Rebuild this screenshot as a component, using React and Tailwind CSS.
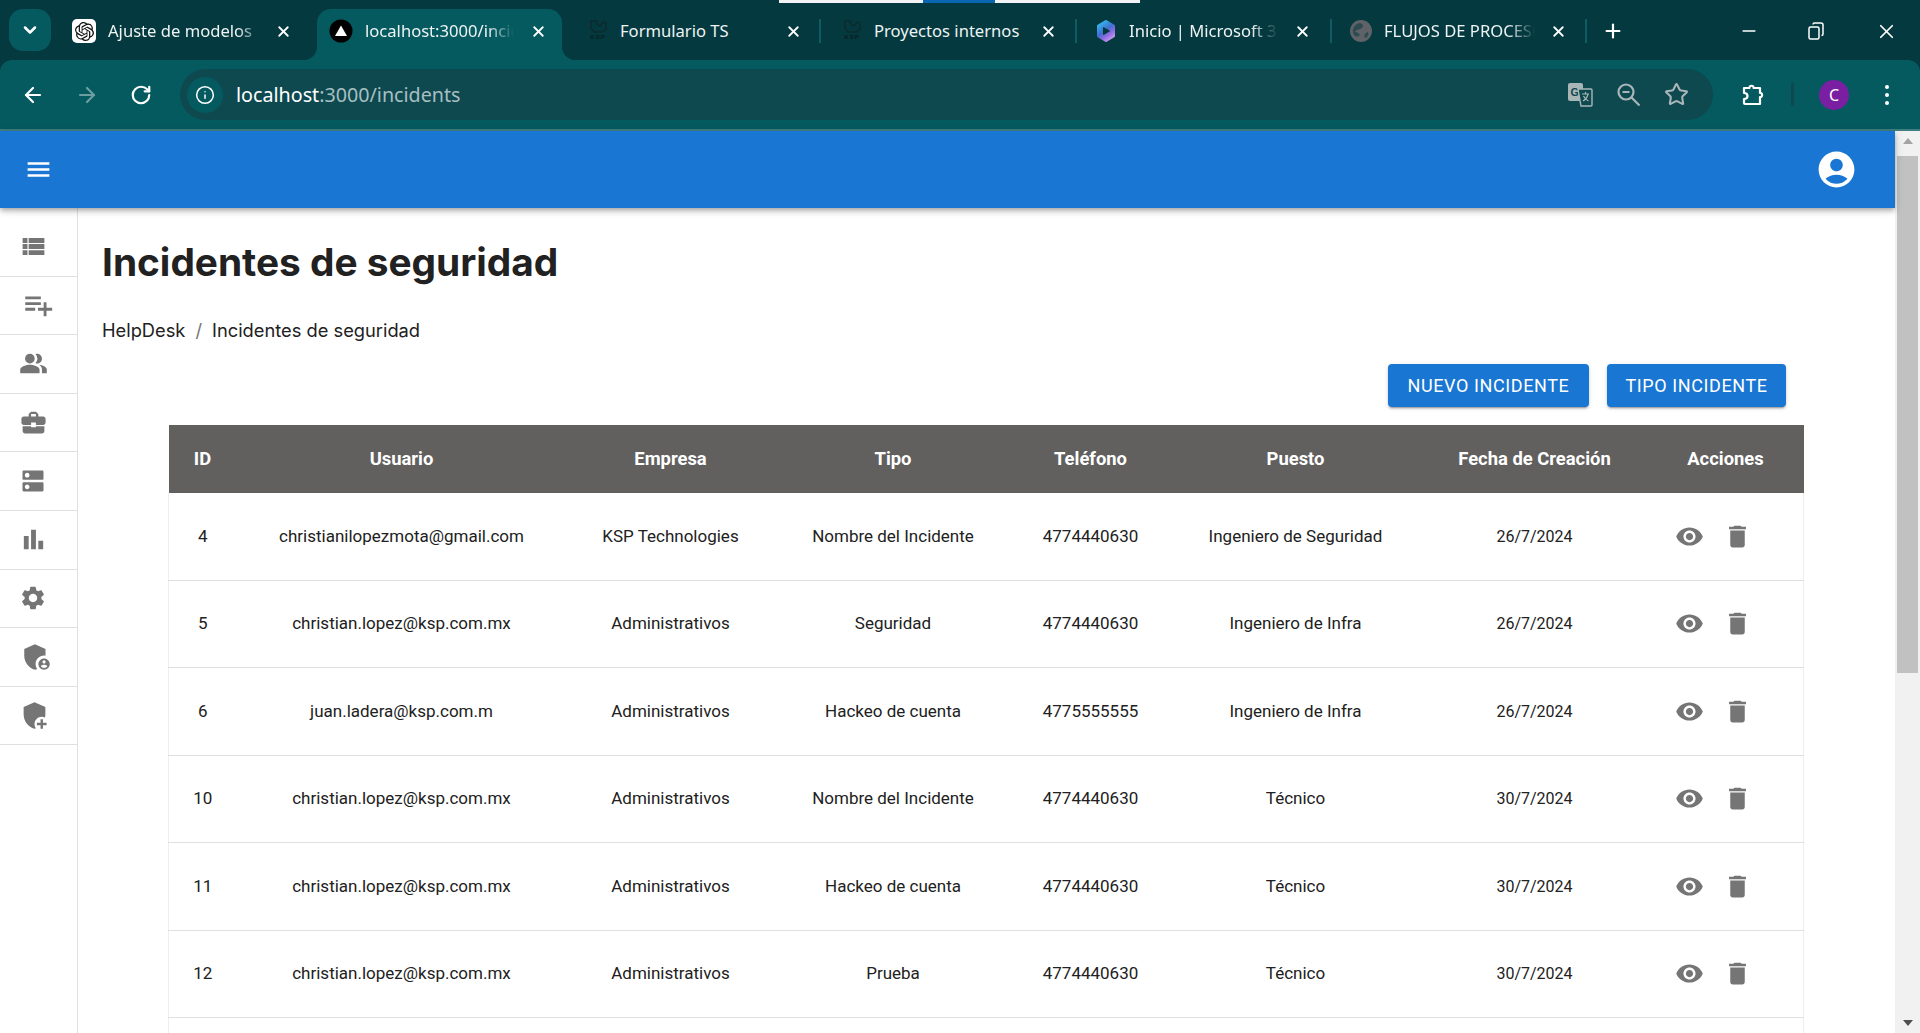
import React from "react";
import { ArrowLeft, ArrowRight, ChevronDown, Info, Minus, Plus, RotateCw, Star, X } from "lucide-react";
import {
  MdAccountCircle,
  MdAddModerator,
  MdAdminPanelSettings,
  MdBarChart,
  MdBusinessCenter,
  MdDelete,
  MdDns,
  MdMenu,
  MdPeopleAlt,
  MdPlaylistAdd,
  MdSettings,
  MdViewList,
  MdVisibility,
} from "react-icons/md";
import { SiOpenai } from "react-icons/si";

const KspIcon = () => (
  <div className="flex h-6 w-6 flex-col items-center">
    <svg width="20" height="15" viewBox="0 0 20 15" fill="none" stroke="#0d2a2d" strokeWidth="1.5">
      <path d="M3 2h5l1 3 3 2 3-4 3 1v6l-4 3H6L3 9z" />
    </svg>
    <span className="font-['Liberation_Sans',sans-serif] text-[6px] leading-[7px] font-bold tracking-[1px] text-[#0a1c1e]">KSP</span>
  </div>
);

const OpenAiIcon = () => (
  <div className="flex h-6 w-6 items-center justify-center rounded-[5px] bg-white">
    <SiOpenai size={19} color="#111" />
  </div>
);

const VercelIcon = () => (
  <svg width="24" height="24" viewBox="0 0 24 24">
    <circle cx="12" cy="12" r="11.5" fill="#000" />
    <path d="M12 6.500l6 10.500H6z" fill="#fff" />
  </svg>
);

const M365Icon = () => (
  <svg width="24" height="24" viewBox="0 0 24 24">
    <defs>
      <linearGradient id="m1" x1="0.2" y1="0" x2="0.8" y2="1">
        <stop offset="0" stopColor="#35b8ee" />
        <stop offset="0.45" stopColor="#3f6fd0" />
        <stop offset="0.7" stopColor="#8d6be0" />
        <stop offset="1" stopColor="#c99af0" />
      </linearGradient>
    </defs>
    <path d="M12 2.500l7.500 4.500v10L12 21.500 4.500 17V7z" fill="url(#m1)" stroke="url(#m1)" strokeWidth="3" strokeLinejoin="round" />
    <path d="M9.500 8.500l6 3.500-6 3.500z" fill="#03393f" stroke="#03393f" strokeLinejoin="round" />
  </svg>
);

const GlobeIcon = () => (
  <svg width="24" height="24" viewBox="0 0 24 24">
    <circle cx="12" cy="12" r="11" fill="#5f6368" />
    <path d="M11 4c3 1 4 3 2 5s-6 1-7 4c2 0 4 1 5 3-2 2-4 2-6 0C2 11 5 5 11 4zM19 13c1 2 0 5-3 6-1-2-1-5 3-6z" fill="#03393f" opacity="0.55" />
  </svg>
);

const TranslateIcon = () => (
  <svg width="26" height="26" viewBox="0 0 26 26">
    <rect x="1" y="1" width="15" height="18" rx="2" fill="#a9b6b8" />
    <text x="3.5" y="14" fontFamily="Liberation Sans, sans-serif" fontSize="11" fontWeight="700" fill="#0e4950">G</text>
    <path d="M11 7h13a1 1 0 0 1 1 1v15a1 1 0 0 1-1 1H14l-3-17z" fill="#0e4950" stroke="#a9b6b8" strokeWidth="1.4" />
    <path d="M15 12h7M18.500 10v2M21 12c-1 4-3 6-5 7M16.500 14c1 2 3 4 5 5" fill="none" stroke="#a9b6b8" strokeWidth="1.2" />
  </svg>
);

const ZoomIcon = () => (
  <svg width="25" height="25" viewBox="0 0 25 25" fill="none" stroke="#a9b6b8" strokeWidth="2.2" className="ml-[23px]">
    <circle cx="10" cy="10" r="7.500" />
    <path d="M6.500 10h7M15.500 15.500l8 8" />
  </svg>
);

const PuzzleIcon = () => (
  <svg width="26" height="26" viewBox="0 0 26 26" fill="none" stroke="#fff" strokeWidth="2.2" strokeLinejoin="round">
    <path d="M4 6h5.500c-.4-3 4.400-3 4 0H20v5c2.800-.4 2.800 4.400 0 4v7H5c-.5 0-1-.5-1-1v-4c2.500 0 3.500-1.500 3.500-3S6.500 11 4 11z" />
  </svg>
);

const RestoreIcon = () => (
  <svg width="16" height="18" viewBox="0 0 16 18" fill="none" stroke="#fff" strokeWidth="1.5">
    <rect x="1" y="5" width="10" height="12" rx="1.5" />
    <path d="M5 2.500c0-.8.5-1.500 1.500-1.500H13c1 0 2 1 2 2v9c0 1-.5 1.500-1.500 1.500" />
  </svg>
);

const tabs = [
  { title: "Ajuste de modelos", icon: <OpenAiIcon />, box: "w-[263px] pl-[18px]", text: "ml-[12px]", close: "mr-[20px]", fade: true },
  { title: "localhost:3000/incidents", icon: <VercelIcon />, box: "w-[245px] pl-[12px] bg-[#055a60] rounded-t-[14px] relative", text: "ml-[12px] mr-[6px]", close: "mr-[10px]", fade: true, active: true },
  { title: "Formulario TS", icon: <KspIcon />, box: "w-[259px] pl-[24px]", text: "ml-[10px]", close: "mr-[12px]", sep: true },
  { title: "Proyectos internos", icon: <KspIcon />, box: "w-[256px] pl-[19px]", text: "ml-[10px]", close: "mr-[13px]", sep: true },
  { title: "Inicio | Microsoft 365", icon: <M365Icon />, box: "w-[255px] pl-[17px]", text: "ml-[11px] mr-[6px]", close: "mr-[14px]", fade: true, sep: true },
  { title: "FLUJOS DE PROCESOS", icon: <GlobeIcon />, box: "w-[255px] pl-[17px]", text: "ml-[11px] mr-[5px]", close: "mr-[13px]", fade: true, sep: true },
];

const Tab = ({ tab }) => (
  <div className={"flex h-[51px] shrink-0 items-center pb-[7px] " + tab.box}>
    {tab.active && (
      <>
        <div className="absolute bottom-0 -left-[14px] h-[14px] w-[14px] bg-[radial-gradient(circle_at_0_0,transparent_14px,#055a60_14.500px)]" />
        <div className="absolute -right-[14px] bottom-0 h-[14px] w-[14px] bg-[radial-gradient(circle_at_100%_0,transparent_14px,#055a60_14.500px)]" />
      </>
    )}
    <div className="w-6 shrink-0">{tab.icon}</div>
    <div
      className={
        "min-w-0 flex-1 overflow-hidden text-[16.600px] whitespace-nowrap text-[#eef3f3] " +
        tab.text +
        " " +
        (tab.fade ? "[mask-image:linear-gradient(to_right,black_82%,transparent)]" : "")
      }
    >
      {tab.title}
    </div>
    <div className={"ml-[4px] flex w-[28px] shrink-0 justify-center " + tab.close}>
      <X size={17} strokeWidth={2.6} color="#fff" />
    </div>
    {tab.sep && <div className="h-[24px] w-[2px] shrink-0 bg-[#0e5b62]" />}
  </div>
);

const ChromeBar = () => (
  <div className="relative h-[131px] shrink-0 bg-[#03393f] font-['Noto_Sans',sans-serif]">
    <div className="absolute top-0 left-[779px] flex h-[3px]">
      <div className="w-[144px] bg-[#f1f3f4]" />
      <div className="w-[72px] bg-[#0a66b0]" />
      <div className="w-[145px] bg-[#f1f3f4]" />
    </div>
    <div className="flex h-[60px] items-end">
      <div className="mb-[9px] ml-[9px] flex h-[42px] w-[42px] items-center justify-center rounded-[14px] bg-[#055a60]">
        <ChevronDown size={20} strokeWidth={3} color="#fff" />
      </div>
      <div className="w-[3px]" />
      {tabs.map((t) => (
        <Tab key={t.title} tab={t} />
      ))}
      <div className="flex h-[51px] items-center pb-[7px] pl-[15px]">
        <Plus size={22} strokeWidth={2.4} color="#fff" />
      </div>
      <div className="flex h-[51px] flex-1 items-center pb-[7px]">
        <div className="ml-[115px] w-[20px]">
          <Minus size={20} strokeWidth={2} color="#fff" />
        </div>
        <div className="ml-[49px]">
          <RestoreIcon />
        </div>
        <div className="ml-[51px]">
          <X size={23} strokeWidth={1.8} color="#fff" />
        </div>
      </div>
    </div>
    <div className="flex h-[69px] items-center rounded-t-[12px] bg-[#055a60]">
      <div className="flex w-[180px] items-center pl-[21px]">
        <ArrowLeft size={24} strokeWidth={2.2} color="#fff" />
        <ArrowRight size={24} strokeWidth={2.2} color="#6c9ea1" className="ml-[30px]" />
        <RotateCw size={22} strokeWidth={2.4} color="#fff" className="ml-[31px]" />
      </div>
      <div className="flex h-[51px] w-[1533px] items-center rounded-full bg-[#0e4950] pl-[7px]">
        <div className="flex h-[36px] w-[36px] items-center justify-center rounded-full bg-[#055a60]">
          <Info size={20} strokeWidth={1.8} color="#fff" />
        </div>
        <div className="ml-[13px] flex-1 text-[19.700px] text-[#a7bfc1]">
          <span className="text-white">localhost</span>:3000/incidents
        </div>
        <TranslateIcon />
        <ZoomIcon />
        <Star size={25} strokeWidth={2} color="#a9b6b8" className="mr-[24px] ml-[23px]" />
      </div>
      <div className="ml-[27px]">
        <PuzzleIcon />
      </div>
      <div className="ml-[25px] h-[23px] w-[3px] bg-[#0e4950]" />
      <div className="ml-[25px] flex h-[30px] w-[30px] items-center justify-center rounded-full bg-[#7b1fa2] text-[16px] text-white">C</div>
      <div className="ml-[36px] flex flex-col gap-[4px]">
        <div className="h-[4px] w-[4px] rounded-full bg-white" />
        <div className="h-[4px] w-[4px] rounded-full bg-white" />
        <div className="h-[4px] w-[4px] rounded-full bg-white" />
      </div>
    </div>
    <div className="h-[2px] bg-[#3f7d7f]" />
  </div>
);

const sideIcons = [
  { Icon: MdViewList, size: 29 },
  { Icon: MdPlaylistAdd, size: 34, cls: "ml-[10px]" },
  { Icon: MdPeopleAlt, size: 29 },
  { Icon: MdBusinessCenter, size: 29 },
  { Icon: MdDns, size: 28 },
  { Icon: MdBarChart, size: 29 },
  { Icon: MdSettings, size: 28 },
  { Icon: MdAdminPanelSettings, size: 34, cls: "ml-[8px]" },
  { Icon: MdAddModerator, size: 29, cls: "ml-[2px]" },
];

const Sidebar = () => (
  <div className="w-[78px] shrink-0 border-r border-[#e0e0e0] pt-[10px]">
    {sideIcons.map(({ Icon, size, cls }, i) => (
      <div key={i} className="flex h-[58.600px] w-full items-center justify-center border-b border-[#e0e0e0] pr-[11px]">
        <Icon size={size} color="#757575" className={cls} />
      </div>
    ))}
  </div>
);

const rows = [
  ["4", "christianilopezmota@gmail.com", "KSP Technologies", "Nombre del Incidente", "4774440630", "Ingeniero de Seguridad", "26/7/2024"],
  ["5", "christian.lopez@ksp.com.mx", "Administrativos", "Seguridad", "4774440630", "Ingeniero de Infra", "26/7/2024"],
  ["6", "juan.ladera@ksp.com.m", "Administrativos", "Hackeo de cuenta", "4775555555", "Ingeniero de Infra", "26/7/2024"],
  ["10", "christian.lopez@ksp.com.mx", "Administrativos", "Nombre del Incidente", "4774440630", "Técnico", "30/7/2024"],
  ["11", "christian.lopez@ksp.com.mx", "Administrativos", "Hackeo de cuenta", "4774440630", "Técnico", "30/7/2024"],
  ["12", "christian.lopez@ksp.com.mx", "Administrativos", "Prueba", "4774440630", "Técnico", "30/7/2024"],
];

const heads = ["ID", "Usuario", "Empresa", "Tipo", "Teléfono", "Puesto", "Fecha de Creación", "Acciones"];

const IncidentsTable = () => (
  <div className="mt-[18px] ml-[66px] w-[1636px] font-['Roboto',sans-serif]">
    <table className="w-full table-fixed border-collapse text-center text-[17px] text-[#212121]">
      <colgroup>
        <col className="w-[68px]" />
        <col className="w-[330px]" />
        <col className="w-[208px]" />
        <col className="w-[237px]" />
        <col className="w-[158px]" />
        <col className="w-[252px]" />
        <col className="w-[226px]" />
        <col />
      </colgroup>
      <thead>
        <tr className="h-[68px] bg-[#62605e] text-[18.400px] text-white">
          {heads.map((h) => (
            <th key={h} className="font-bold">
              {h}
            </th>
          ))}
        </tr>
      </thead>
      <tbody>
        {rows.map((r) => (
          <tr key={r[0]} className="h-[87.500px] border-x border-b border-x-[#eeeeee] border-b-[#e0e0e0] first:h-[87px]">
            {r.map((c, i) => (
              <td key={i} className={i === 6 ? "pt-[1px] text-[16px]" : ""}>
                {c}
              </td>
            ))}
            <td>
              <div className="flex items-center pl-[27px]">
                <MdVisibility size={29} color="#757575" />
                <MdDelete size={29} color="#757575" className="ml-[19px]" />
              </div>
            </td>
          </tr>
        ))}
        <tr className="h-[87.500px] border-x border-x-[#eeeeee]">
          <td colSpan={8} />
        </tr>
      </tbody>
    </table>
  </div>
);

const ScrollTrack = () => (
  <div className="flex w-[25px] shrink-0 flex-col items-center bg-[#f1f1f1]">
    <div className="mt-[7px] h-0 w-0 border-x-[5.500px] border-b-[6px] border-x-transparent border-b-[#a3a3a3]" />
    <div className="mt-[12px] h-[517px] w-[21px] bg-[#c1c1c1]" />
    <div className="flex-1" />
    <div className="mb-[7px] h-0 w-0 border-x-[5.500px] border-t-[6px] border-x-transparent border-t-[#505050]" />
  </div>
);

export default function App() {
  return (
    <div className="flex h-[1033px] w-[1920px] flex-col overflow-hidden bg-white">
      <ChromeBar />
      <div className="flex min-h-0 flex-1">
        <div className="flex min-w-0 flex-1 flex-col">
          <div className="relative z-10 flex h-[77px] shrink-0 items-center justify-between bg-[#1976d2] pr-[37px] pl-[24px] shadow-[0_2px_4px_-1px_rgba(0,0,0,0.2),0_4px_5px_0_rgba(0,0,0,0.14),0_1px_10px_0_rgba(0,0,0,0.12)]">
            <MdMenu size={29} color="#fff" />
            <MdAccountCircle size={43} color="#fff" />
          </div>
          <div className="flex min-h-0 flex-1">
            <Sidebar />
            <main className="min-w-0 flex-1 pt-[29px] pl-[24px]">
              <h1 className="font-['Inter',sans-serif] text-[38.800px] leading-[50px] font-bold text-[#212121]">Incidentes de seguridad</h1>
              <div className="mt-[29px] flex font-['Inter',sans-serif] text-[18.300px] leading-[28px] text-[#212121]">
                <span>HelpDesk</span>
                <span className="mx-[10px] text-[#757575]">/</span>
                <span>Incidentes de seguridad</span>
              </div>
              <div className="mt-[20px] flex justify-end gap-[18px] pr-[109px] font-['Roboto',sans-serif]">
                <button className="h-[43px] w-[201px] rounded-[4px] bg-[#1976d2] text-[18px] tracking-[0.6px] text-white shadow-[0_3px_1px_-2px_rgba(0,0,0,0.2),0_2px_2px_0_rgba(0,0,0,0.14),0_1px_5px_0_rgba(0,0,0,0.12)]">
                  NUEVO INCIDENTE
                </button>
                <button className="h-[43px] w-[179px] rounded-[4px] bg-[#1976d2] text-[18px] tracking-[0.6px] text-white shadow-[0_3px_1px_-2px_rgba(0,0,0,0.2),0_2px_2px_0_rgba(0,0,0,0.14),0_1px_5px_0_rgba(0,0,0,0.12)]">
                  TIPO INCIDENTE
                </button>
              </div>
              <IncidentsTable />
            </main>
          </div>
        </div>
        <ScrollTrack />
      </div>
    </div>
  );
}
